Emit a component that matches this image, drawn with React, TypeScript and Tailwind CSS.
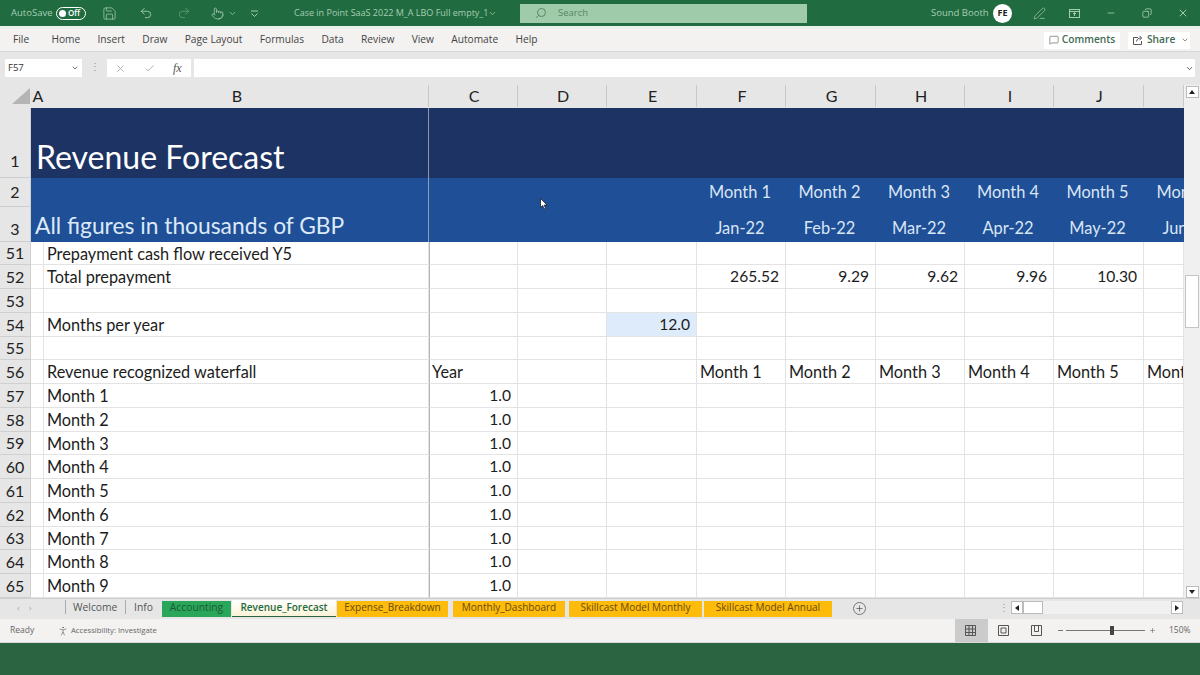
import {
  ChevronDown,
  Check,
  Copy,
  Minus,
  MessageSquare,
  PenLine,
  Plus,
  Redo2,
  Save,
  Search,
  Undo2,
  X,
  Pointer,
  PersonStanding,
} from "lucide-react";

const cols = "grid grid-cols-[31px_13px_385px_89px_89px_90px_89px_90px_89px_89px_90px_40px]";

const ribbonTabs = ["File", "Home", "Insert", "Draw", "Page Layout", "Formulas", "Data", "Review", "View", "Automate", "Help"];
const letters = ["C", "D", "E", "F", "G", "H", "I", "J", ""];

type Row = { n: number; b?: string; c?: string; e?: string; f?: string[]; fLeft?: boolean; cLeft?: boolean };

const rows: Row[] = [
  { n: 51, b: "Prepayment cash flow received Y5" },
  { n: 52, b: "Total prepayment", f: ["265.52", "9.29", "9.62", "9.96", "10.30"] },
  { n: 53 },
  { n: 54, b: "Months per year", e: "12.0" },
  { n: 55 },
  { n: 56, b: "Revenue recognized waterfall", c: "Year", cLeft: true, f: ["Month 1", "Month 2", "Month 3", "Month 4", "Month 5", "Mont"], fLeft: true },
  { n: 57, b: "Month 1", c: "1.0" },
  { n: 58, b: "Month 2", c: "1.0" },
  { n: 59, b: "Month 3", c: "1.0" },
  { n: 60, b: "Month 4", c: "1.0" },
  { n: 61, b: "Month 5", c: "1.0" },
  { n: 62, b: "Month 6", c: "1.0" },
  { n: 63, b: "Month 7", c: "1.0" },
  { n: 64, b: "Month 8", c: "1.0" },
  { n: 65, b: "Month 9", c: "1.0" },
];

const months = [
  ["Month 1", "Jan-22"],
  ["Month 2", "Feb-22"],
  ["Month 3", "Mar-22"],
  ["Month 4", "Apr-22"],
  ["Month 5", "May-22"],
];

function RowHead({ n, className }: { n: number; className: string }) {
  return (
    <div className={`flex justify-center bg-[#e6e6e6] border-r border-b border-[#cfcfcf] text-[16px] text-[#222] ${className}`}>
      <span className="leading-[22px]">{n}</span>
    </div>
  );
}

function GridRow({ row }: { row: Row }) {
  const cell = "border-r border-b border-[#e3e3e3] h-[23.75px] leading-[23px] overflow-hidden whitespace-nowrap text-[#1c1c1c]";
  const text = "text-[16.3px] px-[3px]";
  const num = "text-[15.6px] text-right pr-[6px]";
  const fVals = [0, 1, 2, 3, 4, 5].map((i) => row.f?.[i] ?? "");
  return (
    <div className={`${cols} h-[23.75px]`}>
      <RowHead n={row.n} className="h-[23.75px] items-end" />
      <div className={cell} />
      <div className={`${cell} ${text}`}>{row.b}</div>
      <div className={`${cell} border-l border-l-[#b4b4b4] ${row.cLeft ? "text-[16.3px] px-[2px]" : num}`}>{row.c}</div>
      <div className={cell} />
      <div className={`${cell} ${num} ${row.e ? "bg-[#ddebfb] text-[#1b2f8c]" : ""}`}>{row.e}</div>
      {fVals.map((v, i) => (
        <div key={i} className={`${cell} ${row.fLeft ? text : num}`}>
          {v}
        </div>
      ))}
    </div>
  );
}

function TitleBar() {
  return (
    <div className="h-[26px] bg-[#216b41] flex items-center text-[9.5px] text-[#a5cdb2] pl-[11px] whitespace-nowrap">
      <span className="w-[45px]">AutoSave</span>
      <div className="w-[30px] h-[13px] rounded-full border border-white flex items-center pl-[2px] gap-[2px] text-[8px] text-white font-semibold">
        <span className="w-[7px] h-[7px] rounded-full bg-white" />
        Off
      </div>
      <Save size={15} strokeWidth={1.2} className="ml-[16px]" />
      <Undo2 size={14} strokeWidth={1.5} className="ml-[22px]" />
      <Redo2 size={14} strokeWidth={1.5} className="ml-[24px] opacity-50" />
      <Pointer size={13} strokeWidth={1.4} className="ml-[20px]" />
      <ChevronDown size={9} className="ml-[4px]" />
      <svg width="9" height="9" viewBox="0 0 9 9" fill="none" stroke="currentColor" className="ml-[13px]">
        <path d="M1 2h7M1.5 4.5l3 3 3-3" />
      </svg>
      <span className="ml-[35px] w-[193px] text-[9px]">Case in Point SaaS 2022 M_A LBO Full empty_1</span>
      <ChevronDown size={9} className="ml-[1px]" />
      <div className="ml-[23px] w-[287px] h-[19px] bg-[#9fcbab] flex items-center pl-[15px] gap-[11px] text-[#57875f]">
        <Search size={12} className="-scale-x-100" />
        <span>Search</span>
      </div>
      <span className="ml-[124px] w-[62px]">Sound Booth</span>
      <div className="w-[19px] h-[19px] rounded-full bg-white text-[#222] text-[9px] font-bold flex items-center justify-center">FE</div>
      <PenLine size={13} strokeWidth={1.3} className="ml-[21px]" />
      <svg width="11" height="9" viewBox="0 0 11 9" fill="none" stroke="currentColor" className="ml-[23px]">
        <rect x="0.5" y="0.5" width="10" height="8" />
        <path d="M0.5 2.5h10M5.5 7V4M4 5l1.5-1.5L7 5" />
      </svg>
      <Minus size={10} className="ml-[26px]" />
      <Copy size={10} className="ml-[26px] -scale-x-100" />
      <X size={12} className="ml-[25px]" />
    </div>
  );
}

function RibbonTabs() {
  return (
    <div className="h-[26px] border-t-[3px] border-t-[#e9f0ea] border-b border-b-[#d6d6d6] bg-[#f3f2f1] flex items-center text-[10.2px] text-[#444] pl-[13px]">
      <div className="flex gap-[17.3px] whitespace-nowrap">
        {ribbonTabs.map((t, i) => (
          <span key={t} className={i === 0 ? "mr-[5px]" : ""}>
            {t}
          </span>
        ))}
      </div>
      <div className="ml-auto flex items-center gap-[8px] pr-[10px] font-semibold text-[10.2px] text-[#3f6b54]">
        <div className="w-[76px] h-[17px] bg-white flex items-center justify-center gap-[3px]">
          <MessageSquare size={10} strokeWidth={1.5} className="text-[#555]" />
          Comments
        </div>
        <div className="w-[62px] h-[17px] bg-white flex items-center pl-[5px] gap-[3px]">
          <svg width="11" height="10" viewBox="0 0 11 10" fill="none" stroke="#555">
            <path d="M5 2.5H.5v7h8V6M3.5 6.5C4 4 5.5 3 8 3M6.5 .8 8.7 3 6.5 5.2" />
          </svg>
          Share
          <ChevronDown size={8} className="ml-[3px] text-[#555]" />
        </div>
      </div>
    </div>
  );
}

function FormulaBar() {
  return (
    <div className="h-[33px] bg-[#e6e6e6] flex pt-[7px] pl-[5px] pr-[5px] text-[9.5px] text-[#333]">
      <div className="w-[77px] h-[18px] bg-white flex items-center justify-between px-[3px]">
        F57
        <ChevronDown size={8} />
      </div>
      <div className="w-[25px] text-center text-[#999] leading-[16px]">⋮</div>
      <div className="w-[84px] h-[18px] bg-white flex items-center pl-[8px] text-[#aaa] gap-[18px]">
        <X size={11} />
        <Check size={11} />
        <span className="font-['Liberation_Serif',serif] italic text-[12px] text-[#555]">fx</span>
      </div>
      <div className="ml-[3px] flex-1 h-[18px] bg-white flex items-center justify-end pr-[1px]">
        <ChevronDown size={9} />
      </div>
    </div>
  );
}

function ColHeaders() {
  const sep = "border-r border-[#c8c8c8] flex items-center justify-center h-[22px] pl-[2px]";
  return (
    <div className={`${cols} h-[23px] bg-[#e6e6e6] text-[16px] text-[#222]`}>
      <div className="flex justify-end items-end pb-[3px] pr-[1px] h-[22px]">
        <svg width="18" height="16" viewBox="0 0 18 16">
          <path d="M18 0V16H0Z" fill="#b5b5b5" />
        </svg>
      </div>
      <div className="flex items-center justify-center h-[22px] pl-[1px]">A</div>
      <div className={sep}>B</div>
      {letters.map((l, i) => (
        <div key={i} className={sep}>
          {l}
        </div>
      ))}
    </div>
  );
}

function BandHeaders() {
  const month = "bg-[#1f4f96] flex flex-col text-[16.4px] text-[#d9e6f6] whitespace-nowrap overflow-hidden text-center";
  return (
    <div>
      <div className={`${cols} h-[70px]`}>
        <RowHead n={1} className="h-[70px] items-end pb-[5px]" />
        <div className="col-span-2 bg-[#1c3364] border-r border-[#8c96ad] flex items-end pl-[5px] text-[32px] leading-[40px] text-white pb-[1px]">
          Revenue Forecast
        </div>
        <div className="col-span-9 bg-[#1c3364]" />
      </div>
      <div className={`${cols} h-[63.5px]`}>
        <div className="flex flex-col">
          <RowHead n={2} className="h-[29px] items-center" />
          <RowHead n={3} className="h-[34.5px] items-end pb-[1px]" />
        </div>
        <div className="col-span-2 bg-[#1f4f96] border-r border-[#8c9cbc] flex items-end pl-[4px] pb-[1px] text-[22.8px] leading-[32px] text-[#dce9f8] whitespace-nowrap">
          All figures in thousands of GBP
        </div>
        <div className="col-span-3 bg-[#1f4f96]" />
        {months.map(([m, d]) => (
          <div key={m} className={`${month} pr-[3px]`}>
            <span className="h-[29px] leading-[27px]">{m}</span>
            <span className="h-[34px] leading-[41px]">{d}</span>
          </div>
        ))}
        <div className={month}>
          <span className="h-[29px] w-[87px] leading-[27px]">Month 6</span>
          <span className="h-[34px] w-[87px] leading-[41px]">Jun-22</span>
        </div>
      </div>
    </div>
  );
}

function VScroll() {
  const btn = "w-[13px] h-[13px] bg-white border border-[#bbb] flex items-center justify-center";
  return (
    <div className="w-[16px] bg-[#f0f0f0] flex flex-col items-center pt-[1px]">
      <div className={btn}>
        <span className="w-0 h-0 border-x-[3px] border-x-transparent border-b-[4px] border-b-[#222]" />
      </div>
      <div className="mt-[177px] w-[14px] h-[56px] bg-white border border-[#c4c4c4]" />
      <div className={`mt-[258px] ${btn}`}>
        <span className="w-0 h-0 border-x-[3px] border-x-transparent border-t-[4px] border-t-[#222]" />
      </div>
    </div>
  );
}

function SheetTabs() {
  const amber = "mt-[2px] h-[16px] bg-[#fdbb0b] text-[#6a4a08] text-[10px] leading-[13px] text-center";
  return (
    <div className="h-[21px] bg-[#e6e6e6] border-t border-[#cfcfcf] flex items-start text-[10.3px] text-[#555] whitespace-nowrap">
      <span className="w-[65px] pl-[17px] text-[#aaa] text-[9px] tracking-[9px] leading-[17px]">‹›</span>
      <span className="w-[61px] h-[14px] mt-[1px] border-l border-r border-[#aaa] pl-[7px] leading-[14px]">Welcome</span>
      <span className="w-[36px] pl-[8px] leading-[16px]">Info</span>
      <div className="mt-[2px] w-[69px] h-[16px] bg-[#2aa65a] text-[#1b5a35] leading-[13px] text-center">Accounting</div>
      <div className="ml-[1px] mt-[1px] w-[104px] h-[17px] bg-gradient-to-b from-white to-[#fbf3d8] border-b border-[#2b6440] text-[#1f6a3e] text-[10px] font-semibold leading-[14px] text-center">
        Revenue_Forecast
      </div>
      <div className={`ml-[1px] w-[111px] ${amber}`}>Expense_Breakdown</div>
      <div className={`ml-[5px] w-[112px] ${amber}`}>Monthly_Dashboard</div>
      <div className={`ml-[4px] w-[133px] ${amber}`}>Skillcast Model Monthly</div>
      <div className={`ml-[2px] w-[128px] ${amber}`}>Skillcast Model Annual</div>
      <div className="ml-[21px] mt-[3px] w-[13px] h-[13px] rounded-full border border-[#777] flex items-center justify-center">
        <Plus size={9} className="text-[#555]" />
      </div>
      <span className="ml-[133px] text-[#999] leading-[17px] w-[3px]">⋮</span>
      <div className="ml-[9px] mt-[2px] w-[12px] h-[13px] bg-white border border-[#bbb] flex items-center justify-center">
        <span className="w-0 h-0 border-y-[3px] border-y-transparent border-r-[4px] border-r-[#222]" />
      </div>
      <div className="mt-[2px] w-[20px] h-[13px] bg-white border border-[#bbb]" />
      <div className="mt-[2px] w-[128px] h-[13px] bg-[#f0f0f0]" />
      <div className="mt-[2px] w-[12px] h-[13px] bg-white border border-[#bbb] flex items-center justify-center">
        <span className="w-0 h-0 border-y-[3px] border-y-transparent border-l-[4px] border-l-[#222]" />
      </div>
    </div>
  );
}

function StatusBar() {
  return (
    <div className="h-[24px] bg-[#f3f2f1] border-b border-[#d9d9d9] flex items-center text-[8.5px] text-[#666] pl-[10px] whitespace-nowrap">
      <span className="w-[47px]">Ready</span>
      <PersonStanding size={12} strokeWidth={1.3} />
      <span className="ml-[2px] text-[7.7px]">Accessibility: Investigate</span>
      <div className="ml-auto h-full flex items-center">
        <div className="w-[33px] h-full bg-[#cbcbcb] flex items-center justify-center pr-[2px]">
          <svg width="11" height="11" viewBox="0 0 11 11" fill="none" stroke="#555">
            <path d="M.5.5h10v10H.5zM.5 4h10M.5 7.5h10M4 .5v10M7.5.5v10" />
          </svg>
        </div>
        <svg width="11" height="11" viewBox="0 0 11 11" fill="none" stroke="#555" className="ml-[10px]">
          <path d="M.5.5h10v10H.5zM3 3h5v5H3z" />
        </svg>
        <svg width="11" height="11" viewBox="0 0 11 11" fill="none" stroke="#555" className="ml-[22px]">
          <path d="M.5.5h10v10H.5zM3.5.5v6h4v-6" />
        </svg>
        <span className="ml-[16px] w-[5px] h-px bg-[#777]" />
        <div className="ml-[3px] w-[79px] h-px bg-[#777] flex items-center">
          <span className="ml-[44px] w-[4px] h-[9px] bg-[#444] shrink-0" />
        </div>
        <Plus size={7} className="ml-[4px] text-[#666]" />
        <span className="ml-[13px] w-[31px]">150%</span>
      </div>
    </div>
  );
}

export default function App() {
  return (
    <div className="w-[1200px] h-[675px] overflow-hidden relative flex flex-col bg-[#2b6440] font-['Open_Sans',sans-serif]">
      <TitleBar />
      <RibbonTabs />
      <FormulaBar />
      <div className="flex h-[513px] bg-white">
        <div className="w-[1184px] overflow-hidden font-['Lato',sans-serif]">
          <ColHeaders />
          <BandHeaders />
          {rows.map((r) => (
            <GridRow key={r.n} row={r} />
          ))}
        </div>
        <VScroll />
      </div>
      <SheetTabs />
      <StatusBar />
      {/* mouse pointer */}
      <svg width="8" height="12" viewBox="0 0 8 12" className="absolute left-[540px] top-[198px]">
        <path d="M.5.5v9l2.2-2 1.5 3.4 1.4-.6-1.5-3.2h3Z" fill="#fff" stroke="#111" strokeWidth=".7" />
      </svg>
    </div>
  );
}
